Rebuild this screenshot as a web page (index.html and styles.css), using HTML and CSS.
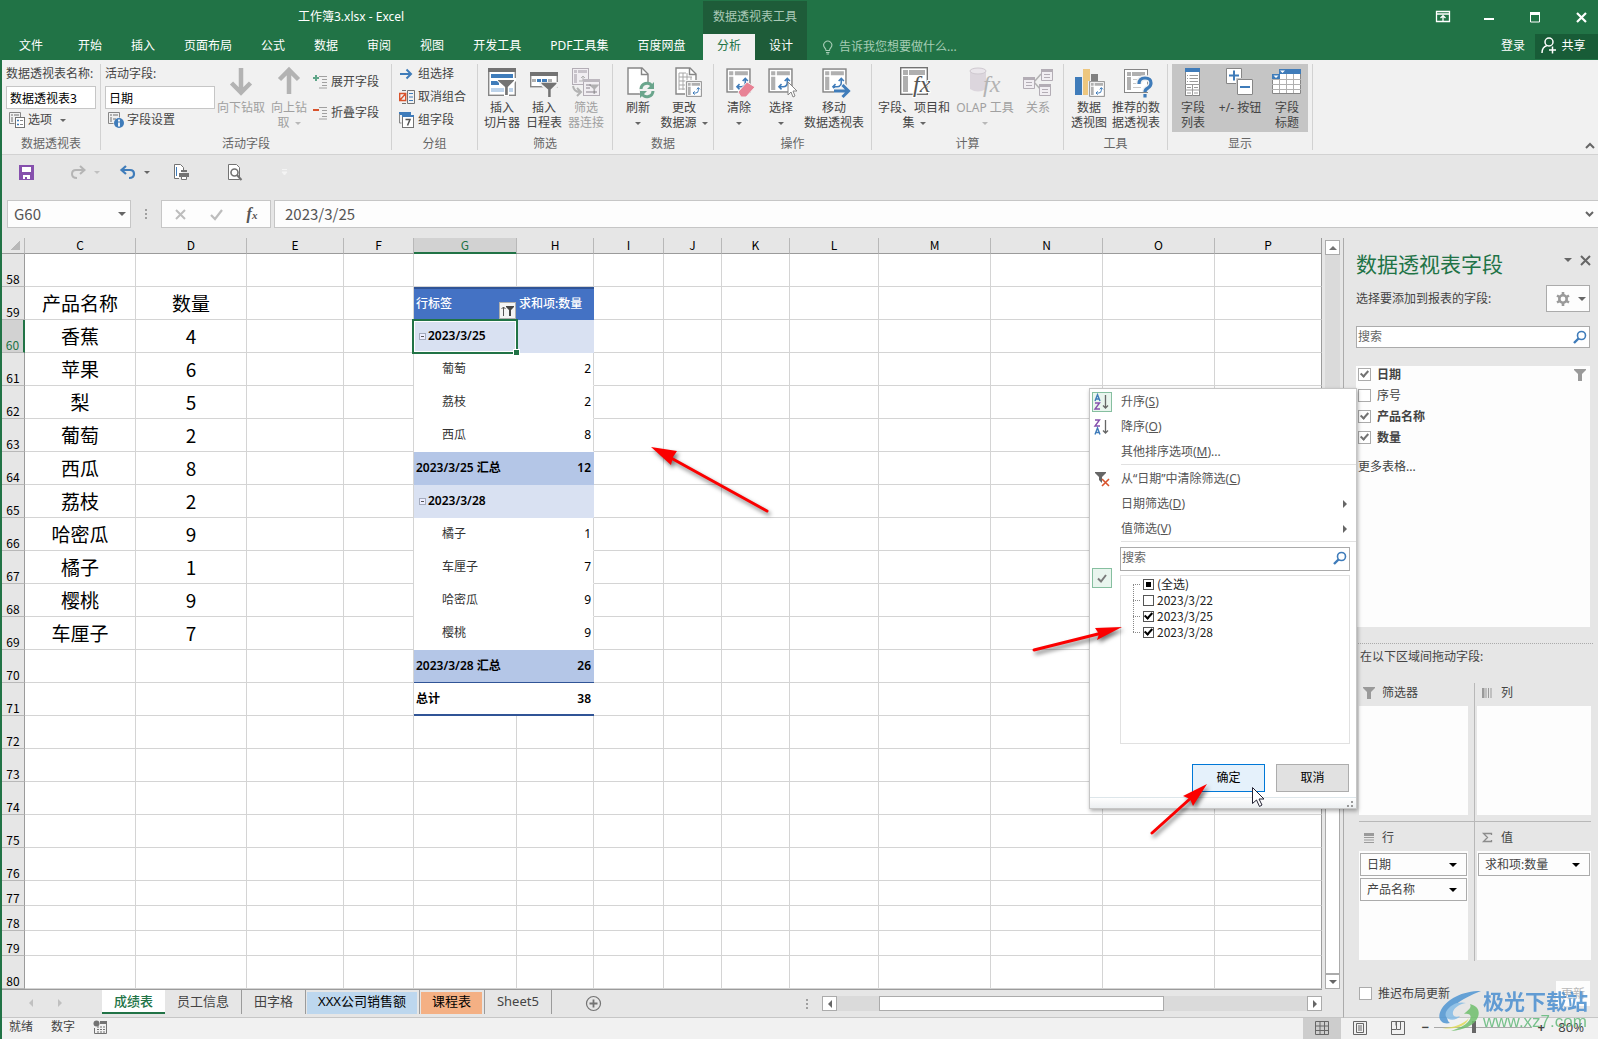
FILE: index.html
```html
<!DOCTYPE html>
<html lang="zh-CN">
<head>
<meta charset="utf-8">
<title>工作簿3.xlsx - Excel</title>
<link rel="stylesheet" href="styles.css">
</head>
<body>
<svg class="defs" aria-hidden="true">
  <symbol id="pivot" viewBox="0 0 24 24">
    <rect x="1" y="1" width="22" height="22" fill="#fff" stroke="#868686" stroke-width="1.4"/>
    <path d="M3 3h4v4H3zM8.500 3H21v4H8.500zM3 8.500h4V21H3z" fill="#b0b0b0"/>
    <path d="M11 18h3.500q4 0 4-4v-4M13 15.500 10.500 18l2.500 2.500M16 12.500 18.500 10l2.500 2.500" fill="none" stroke="#3f7cba" stroke-width="1.5"/>
  </symbol>
  <symbol id="funnel" viewBox="0 0 18 18"><path d="M0 1h18v1l-7 7v9H8V9L0 2z" fill="#737373"/></symbol>
  <symbol id="search" viewBox="0 0 14 14"><circle cx="8.500" cy="5.500" r="4" fill="none" stroke="#3f7cba" stroke-width="1.600"/><path d="M5.500 8.500 1 13" stroke="#3f7cba" stroke-width="2.400"/></symbol>
  <symbol id="page" viewBox="0 0 22 28"><path d="M1 1h14l6 6v20H1z" fill="#fff" stroke="#868686" stroke-width="1.400"/><path d="M14.500 1v6.500H21" fill="none" stroke="#868686" stroke-width="1.400"/></symbol>
</svg>
<div class="app">
  <header class="titlebar">
    <div class="title-left">
      <h1 class="doc-title">工作簿3.xlsx - Excel</h1>
      <nav class="tabs">
        <button class="tab file">文件</button><button class="tab">开始</button><button class="tab">插入</button><button class="tab">页面布局</button><button class="tab">公式</button><button class="tab">数据</button><button class="tab">审阅</button><button class="tab">视图</button><button class="tab">开发工具</button><button class="tab">PDF工具集</button><button class="tab">百度网盘</button>
      </nav>
    </div>
    <div class="context">
      <div class="context-title">数据透视表工具</div>
      <div class="context-tabs"><button class="tab active">分析</button><button class="tab">设计</button></div>
    </div>
    <div class="title-right">
      <div class="win">
        <button aria-label="功能区显示选项"><svg width="14" height="12"><path d="M.5.5h13v10H.500zM.5 3h13M7 10V5M4.500 7 7 4.700 9.500 7" fill="none" stroke="#fff" stroke-width="1.300"/></svg></button>
        <button aria-label="最小化"><svg width="10" height="12"><path d="M0 8h10" stroke="#fff" stroke-width="2"/></svg></button>
        <button aria-label="最大化"><svg width="10" height="11"><path d="M.5 1h9v9h-9z" fill="none" stroke="#fff"/><path d="M0 1.500h10" stroke="#fff" stroke-width="3"/></svg></button>
        <button aria-label="关闭"><svg width="11" height="11"><path d="m1 1 9 9m0-9-9 9" stroke="#fff" stroke-width="2.200"/></svg></button>
      </div>
      <div class="title-tools">
        <button class="tell"><svg width="12" height="15"><path d="M4 10.500q0-1.500-1.500-3A4 4 0 1 1 9 7.500q-1.500 1.500-1.500 3zM4 12.500h3.500M4.500 14h2.500" fill="none" stroke="#a6cdb5" stroke-width="1.100"/></svg>告诉我您想要做什么...</button>
        <button class="login">登录</button>
        <button class="share"><svg width="16" height="17"><circle cx="8" cy="5" r="4" fill="none" stroke="#fff" stroke-width="1.500"/><path d="M1 16q0-6 5-7.500M8 13h7M11.500 9.500v7" fill="none" stroke="#fff" stroke-width="1.500"/></svg>共享</button>
      </div>
    </div>
  </header>

  <section class="ribbon">
    <div class="group g-name">
      <div class="body col">
        <label for="pname">数据透视表名称:</label>
        <input id="pname" class="rin" value="数据透视表3">
        <button class="small"><svg width="17" height="16"><path d="M.5.5h11v5M.5.5v11h5" fill="none" stroke="#868686"/><path d="M2 2h2v2H2zM5 2h5v2H5zM2 5h2v5H2z" fill="#b0b0b0"/><rect x="6.500" y="5.500" width="9" height="10" fill="#fff" stroke="#737373"/><path d="M8 8.500h2M8 12.500h2" stroke="#3f7cba" stroke-width="1.500"/><path d="M11 8.500h3M11 12.500h3" stroke="#868686"/></svg>选项<i class="caret"></i></button>
      </div>
      <div class="glabel">数据透视表</div>
    </div>
    <div class="group g-active">
      <div class="body">
        <div class="col">
          <label for="pfield">活动字段:</label>
          <input id="pfield" class="rin" value="日期">
          <button class="small"><svg width="17" height="16"><path d="M.5.5h11v5M.5.5v11h5" fill="none" stroke="#868686"/><path d="M2 2h2v2H2zM5 2h5v2H5zM2 5h2v5H2zM5 6h3v2H5z" fill="#b0b0b0"/><circle cx="11" cy="11" r="5" fill="#3f7cba"/><path d="M11 7.500v2M11 10.500v4" stroke="#fff" stroke-width="1.800"/></svg>字段设置</button>
        </div>
        <button class="big off w48"><svg width="32" height="30"><path d="M16 1v25M6.500 16 16 25.500l9.500-9.500" fill="none" stroke="#b3b3b3" stroke-width="4.500"/></svg>向下钻取</button>
        <button class="big off w48"><svg width="32" height="30"><path d="M16 27V3M6.500 12.500 16 3l9.500 9.500" fill="none" stroke="#b3b3b3" stroke-width="4.500"/></svg>向上钻<br>取<i class="caret"></i></button>
        <div class="stack2">
          <button class="small"><svg width="16" height="14"><path d="M3 0v6M0 3h6" stroke="#5fa588" stroke-width="2"/><path d="M6 1.500h8M9 4.500h5M9 7.500h5M9 10.500h5M6 13h8" stroke="#a0a0a0"/></svg>展开字段</button>
          <button class="small"><svg width="16" height="14"><path d="M0 4h6" stroke="#d8532c" stroke-width="2"/><path d="M6 1.500h8M9 4.500h5M9 7.500h5M9 10.500h5M6 13h8" stroke="#a0a0a0"/></svg>折叠字段</button>
        </div>
      </div>
      <div class="glabel">活动字段</div>
    </div>
    <div class="group g-group">
      <div class="body col">
        <button class="small"><svg width="16" height="14"><path d="M1 7h11M7.500 2.500 12 7l-4.500 4.500" fill="none" stroke="#3f7cba" stroke-width="2"/></svg>组选择</button>
        <button class="small"><svg width="16" height="14"><path d="M.7 3.500h6v7h-6zM.7 10.500l6-7" fill="none" stroke="#d8532c" stroke-width="1.400"/><path d="M3 .5h4M3 13.500h4M8.500.5h7v13h-7z" fill="none" stroke="#737373"/><path d="M10 3.500h4M10 7h4M10 10.500h4" stroke="#3f7cba"/></svg>取消组合</button>
        <button class="small"><svg width="16" height="16"><path d="M0 1.500h12" stroke="#3f7cba" stroke-width="3"/><path d="M.5 2v9h2" fill="none" stroke="#868686"/><rect x="3.500" y="4.500" width="11" height="11" fill="#fff" stroke="#737373"/><path d="M3 4h12" stroke="#3f7cba" stroke-width="2"/><path d="M6.500 7.500h4.500L8.500 13.500" fill="none" stroke="#555" stroke-width="1.500"/></svg>组字段</button>
      </div>
      <div class="glabel">分组</div>
    </div>
    <div class="group g-filter">
      <div class="body">
        <button class="big w42"><svg width="32" height="30"><rect x="2.700" y="1.700" width="26.600" height="26.600" fill="#fff" stroke="#868686" stroke-width="1.400"/><path d="M2 1h28v4H2z" fill="#737373"/><path d="M5 7h22v4H5zM5 14h8v4H5z" fill="#3f7cba"/><path d="M5 21h22v4H5z" fill="#bdd3ea"/><path d="M10 11h20v3l-7 7v8h-5v-8l-8-8z" fill="#fff"/><use href="#funnel" x="11" y="12" width="18" height="16"/></svg>插入<br>切片器</button>
        <button class="big w42"><svg width="32" height="30"><rect x="2.700" y="5.700" width="26.600" height="14" fill="#fff" stroke="#868686" stroke-width="1.400"/><path d="M2 5h28v4H2z" fill="#737373"/><path d="M4 12h4v3H4zM20 12h4v3h-4z" fill="#b0b0b0"/><path d="M9 12h4v3H9zM14 12h5v3h-5z" fill="#3f7cba"/><path d="M11 15h20v4l-7 5v6h-5v-6l-8-7z" fill="#f1f1f1"/><use href="#funnel" x="12" y="15" width="18" height="15"/></svg>插入<br>日程表</button>
        <button class="big off w42"><svg width="32" height="30"><rect x="2.500" y="1.500" width="16" height="16" fill="#f1eef2" stroke="#b3adb5"/><path d="M4 3h3v3H4zM8 3h9v3H8zM4 7h3v9H4z" fill="#c8c3ca"/><path d="M9 14h4V9M11 11l2-2 2 2" fill="none" stroke="#b3b3b3"/><path d="M3 19q1 6 7 6M7 21l4 4-4 4" fill="none" stroke="#b3b3b3" stroke-width="2"/><rect x="13.500" y="12.500" width="16" height="16" fill="#f1eef2" stroke="#b3adb5"/><path d="M13 12h17v3H13z" fill="#bdb8bf"/><path d="M16 18h5M16 21h4M16 25h11" stroke="#bdb8bf" stroke-width="2"/><use href="#funnel" x="19" y="17" width="10" height="10" opacity=".5"/></svg>筛选<br>器连接</button>
      </div>
      <div class="glabel">筛选</div>
    </div>
    <div class="group g-data">
      <div class="body">
        <button class="big w40"><svg width="32" height="30"><use href="#page" x="5" y="0" width="22" height="28"/><circle cx="25" cy="23" r="8" fill="#f1f1f1"/><path d="M19 22a6 6 0 0 1 11-3M31 24a6 6 0 0 1-11 3" fill="none" stroke="#6aa58c" stroke-width="3"/><path d="M32 15v7h-7zM18 31v-7h7z" fill="#6aa58c"/></svg>刷新<br><i class="caret alone"></i></button>
        <button class="big w52"><svg width="32" height="30"><use href="#page" x="7" y="0" width="22" height="28"/><path d="M11 6h7M11 10h13M11 14h13M11 18h8M11 22h8M11 6v17M15 6v17M19 6v12M23 10v6" stroke="#a8a8a8" fill="none"/><path d="M17 13h15v17H17z" fill="#f1f1f1"/><use href="#pivot" x="18" y="14" width="16" height="16"/></svg>更改<br>数据源<i class="caret"></i></button>
      </div>
      <div class="glabel">数据</div>
    </div>
    <div class="group g-act">
      <div class="body">
        <button class="big w42"><svg width="32" height="30"><use href="#pivot" x="3" y="1" width="25" height="25"/><path d="m15 25 9-10 8 5-9 10h-5z" fill="#e88295" stroke="#f1f1f1"/></svg>清除<br><i class="caret alone"></i></button>
        <button class="big w42"><svg width="32" height="30"><use href="#pivot" x="3" y="1" width="25" height="25"/><path d="M23 15v13l3-3 2 5 2-1-2-5h4z" fill="#fff" stroke="#868686"/></svg>选择<br><i class="caret alone"></i></button>
        <button class="big w64"><svg width="32" height="30"><use href="#pivot" x="4" y="1" width="25" height="25"/><path d="M16 24h13M24 17.500l6.500 6.500-6.500 6.500" fill="none" stroke="#f1f1f1" stroke-width="6"/><path d="M16 24h14M24.500 18l6 6-6 6" fill="none" stroke="#3f7cba" stroke-width="3"/></svg>移动<br>数据透视表</button>
      </div>
      <div class="glabel">操作</div>
    </div>
    <div class="group g-calc">
      <div class="body">
        <button class="big w76"><svg width="32" height="30"><rect x="2.700" y=".7" width="26.600" height="26.600" fill="#fff" stroke="#737373" stroke-width="1.400"/><path d="M5 3h5v5H5zM11 3h16v5H11zM5 9h5v16H5z" fill="#b0b0b0"/><text x="15" y="25" class="fx halo">fx</text></svg>字段、项目和<br>集<i class="caret"></i></button>
        <button class="big off w66"><svg width="32" height="30"><path d="M1 4v18q8 5 16 0V4z" fill="#dcd6dd"/><ellipse cx="9" cy="4" rx="8" ry="3" fill="#eae6eb" stroke="#cfc9d0"/><text x="14" y="25" class="fx pale">fx</text></svg>OLAP 工具<br><i class="caret alone"></i></button>
        <button class="big off w40"><svg width="32" height="30"><path d="M12 15 19 7M12 15l7 8" stroke="#b3b3b3" stroke-width="1.500"/><g fill="#f1eef2" stroke="#b3adb5"><path d="M1.500 10.500h11v11h-11zM19.500 2.500h11v11h-11zM17.500 17.500h11v11h-11z"/><path d="M1 11.500h12M19 3.500h12M17 18.500h12" stroke-width="3"/><path d="M4 15.500h6M4 18.500h6M22 7.500h6M22 10.500h6M20 22.500h6M20 25.500h6"/></g></svg>关系</button>
      </div>
      <div class="glabel">计算</div>
    </div>
    <div class="group g-tools">
      <div class="body">
        <button class="big w40"><svg width="32" height="30"><path d="M2 10h7v18H2z" fill="#3f7cba"/><path d="M10 2h7v26h-7z" fill="#eec77f"/><path d="M18 7h7v21h-7z" fill="#808080"/><path d="M15 14h17v16H15z" fill="#f1f1f1"/><use href="#pivot" x="16" y="14" width="16" height="16"/></svg>数据<br>透视图</button>
        <button class="big w54"><svg width="32" height="30"><rect x="4.500" y="2.500" width="23" height="23" fill="#fff" stroke="#868686"/><path d="M7 5h4v4H7zM12 5h13v4H12zM7 10h4v13H7z" fill="#b0b0b0"/><path d="M13 12.500h11M13 16.500h8M13 20.500h8" stroke="#c8c8c8"/><path d="M19 17q0-6 6-6t6 5q0 3-3 5-3 1.500-3 4M25 27v3.500" fill="none" stroke="#f1f1f1" stroke-width="6"/><path d="M19 17q0-6 6-6t6 5q0 3-3 5-3 1.500-3 4M25 27v3.500" fill="none" stroke="#3f7cba" stroke-width="3.200"/></svg>推荐的数<br>据透视表</button>
      </div>
      <div class="glabel">工具</div>
    </div>
    <div class="group g-show">
      <div class="body on">
        <button class="big w42"><svg width="32" height="30"><rect x="8.500" y="1.500" width="14" height="27" fill="#fff" stroke="#868686"/><path d="M8 1h15v4H8z" fill="#3f7cba"/><path d="M10 8.500h1M12.500 8.500H21M10 11.500h1M12.500 11.500H21M10 14.500h1M12.500 14.500H21M8 17.500h15M8 23h15M15.500 17v12M10 20.500h4M17 20.500h4M10 26h4M17 26h4" stroke="#9a9a9a"/></svg>字段<br>列表</button>
        <button class="big w52"><svg width="32" height="30"><path d="M2.500 1.500h15v15h-15z" fill="#fff" stroke="#868686"/><path d="M12.500 11.500h17v17h-17z" fill="#fff" stroke="#c5c5c5"/><path d="M13.500 12.500h15v15h-15z" fill="#fff" stroke="#868686"/><path d="M5 8.500h10M10 3.500v10M16 20h10" stroke="#3f7cba" stroke-width="2"/></svg>+/- 按钮</button>
        <button class="big w42"><svg width="32" height="30"><path d="M1.500 7.500h7v-5h21v24h-28z" fill="#fff" stroke="#868686"/><path d="M1 12.500h29M1 17.500h29M1 22.500h29M8.500 7v19M15.500 7v19M22.500 7v19" stroke="#b0b0b0"/><path d="M8 2h22v5H8zM1 7h8v5H1z" fill="#3f7cba"/><path d="M9 3.500h5L11.500 6zM2.500 8.500h5L5 11z" fill="#fff"/></svg>字段<br>标题</button>
      </div>
      <div class="glabel">显示</div>
    </div>
    <button class="collapse" aria-label="折叠功能区"><svg width="10" height="7"><path d="m1 6 4-4 4 4" fill="none" stroke="#666" stroke-width="2"/></svg></button>
  </section>

  <div class="qat">
    <button class="q-save" aria-label="保存"><svg width="15" height="15"><path d="M0 0h15v15H0z" fill="#8650ad"/><path d="M3 2h9v5H3zM4 10h7v4H8v-2H6v2H4z" fill="#fff"/></svg></button>
    <button class="q-redo" aria-label="恢复"><svg width="16" height="14"><path d="M14 5H6q-4 0-4 4t5 4M10 1l4.500 4L10 9" fill="none" stroke="#b5b5b5" stroke-width="2"/></svg><i class="caret dim"></i></button>
    <button class="q-undo" aria-label="撤消"><svg width="16" height="14"><path d="M2 5h8q4 0 4 4t-5 4M6 1 1.500 5 6 9" fill="none" stroke="#3f7cba" stroke-width="2.200"/></svg><i class="caret"></i></button>
    <button class="q-print" aria-label="快速打印"><svg width="17" height="17"><path d="M6 14.500H1.500V.500h6l3 3v3" fill="#fff" stroke="#737373"/><path d="M3.500 3v9" stroke="#3f7cba"/><path d="M6 9h10v4H6zM8 6h6v2H8z" fill="#737373"/><path d="M8.500 12.500h5v3h-5z" fill="#fff" stroke="#737373"/></svg></button>
    <button class="q-view" aria-label="打印预览"><svg width="16" height="17"><path d="M1.500.5h8l3 3v12h-11z" fill="#fff" stroke="#737373"/><circle cx="7.500" cy="8.500" r="3.500" fill="#fff" stroke="#737373" stroke-width="1.600"/><path d="m10 11 4.500 5" stroke="#737373" stroke-width="2"/></svg></button>
    <button class="q-more" aria-label="自定义"><svg width="7" height="7"><path d="M1 .5h5M1 3h5L3.500 6z" fill="#f4f4f4" stroke="#f4f4f4"/></svg></button>
  </div>

  <div class="fbar">
    <div class="namebox"><input aria-label="名称框" value="G60"><i class="tri down"></i></div>
    <div class="dots"><i></i><i></i><i></i></div>
    <div class="fbtns">
      <button aria-label="取消"><svg width="11" height="11"><path d="m1 1 9 9m0-9-9 9" stroke="#bdbdbd" stroke-width="2"/></svg></button>
      <button aria-label="输入"><svg width="13" height="11"><path d="m1 6 4 4 7-9" fill="none" stroke="#bdbdbd" stroke-width="2.200"/></svg></button>
      <button aria-label="插入函数" class="fxb">f<small>x</small></button>
    </div>
    <div class="finput"><input aria-label="编辑栏" value="2023/3/25"><svg width="9" height="7"><path d="m1 1 3.500 3.500L8 1" fill="none" stroke="#666" stroke-width="2"/></svg></div>
  </div>

  <main class="work">
    <section class="sheet">
      <div class="gridrow">
        <table class="grid">
          <colgroup><col class="c-h"><col class="c-111"><col class="c-111"><col class="c-e"><col class="c-70"><col class="c-g"><col class="c-hh"><col class="c-70"><col class="c-j"><col class="c-k"><col class="c-l"><col class="c-112"><col class="c-112"><col class="c-112"><col></colgroup>
          <thead><tr><th class="corner"></th><th>C</th><th>D</th><th>E</th><th>F</th><th class="sel">G</th><th>H</th><th>I</th><th>J</th><th>K</th><th>L</th><th>M</th><th>N</th><th>O</th><th>P</th></tr></thead>
          <tbody>
          <tr><th>58</th><td></td><td></td><td></td><td></td><td></td><td></td><td></td><td></td><td></td><td></td><td></td><td></td><td></td><td></td></tr>
          <tr><th>59</th><td>产品名称</td><td>数量</td><td></td><td></td><td class="pv head">行标签<button class="fbtn" aria-label="筛选"><svg width="13" height="13"><path d="M2.500 12V3M.5 5l2-2 2 2" fill="none" stroke="#555"/><path d="M5 2h8v1L10 6v6H8V6L5 3z" fill="#444"/></svg></button></td><td class="pv head">求和项:数量</td><td></td><td></td><td></td><td></td><td></td><td></td><td></td><td></td></tr>
          <tr><th class="sel">60</th><td>香蕉</td><td>4</td><td></td><td></td><td class="pv light cur"><i class="minus"></i>2023/3/25<span class="cursor-box"></span></td><td class="pv light"></td><td></td><td></td><td></td><td></td><td></td><td></td><td></td><td></td></tr>
          <tr><th>61</th><td>苹果</td><td>6</td><td></td><td></td><td class="pv item">葡萄</td><td class="pv num">2</td><td></td><td></td><td></td><td></td><td></td><td></td><td></td><td></td></tr>
          <tr><th>62</th><td>梨</td><td>5</td><td></td><td></td><td class="pv item">荔枝</td><td class="pv num">2</td><td></td><td></td><td></td><td></td><td></td><td></td><td></td><td></td></tr>
          <tr><th>63</th><td>葡萄</td><td>2</td><td></td><td></td><td class="pv item">西瓜</td><td class="pv num">8</td><td></td><td></td><td></td><td></td><td></td><td></td><td></td><td></td></tr>
          <tr><th>64</th><td>西瓜</td><td>8</td><td></td><td></td><td class="pv sub">2023/3/25 汇总</td><td class="pv sub num">12</td><td></td><td></td><td></td><td></td><td></td><td></td><td></td><td></td></tr>
          <tr><th>65</th><td>荔枝</td><td>2</td><td></td><td></td><td class="pv light"><i class="minus"></i>2023/3/28</td><td class="pv light"></td><td></td><td></td><td></td><td></td><td></td><td></td><td></td><td></td></tr>
          <tr><th>66</th><td>哈密瓜</td><td>9</td><td></td><td></td><td class="pv item">橘子</td><td class="pv num">1</td><td></td><td></td><td></td><td></td><td></td><td></td><td></td><td></td></tr>
          <tr><th>67</th><td>橘子</td><td>1</td><td></td><td></td><td class="pv item">车厘子</td><td class="pv num">7</td><td></td><td></td><td></td><td></td><td></td><td></td><td></td><td></td></tr>
          <tr><th>68</th><td>樱桃</td><td>9</td><td></td><td></td><td class="pv item">哈密瓜</td><td class="pv num">9</td><td></td><td></td><td></td><td></td><td></td><td></td><td></td><td></td></tr>
          <tr><th>69</th><td>车厘子</td><td>7</td><td></td><td></td><td class="pv item">樱桃</td><td class="pv num">9</td><td></td><td></td><td></td><td></td><td></td><td></td><td></td><td></td></tr>
          <tr><th>70</th><td></td><td></td><td></td><td></td><td class="pv sub last">2023/3/28 汇总</td><td class="pv sub last num">26</td><td></td><td></td><td></td><td></td><td></td><td></td><td></td><td></td></tr>
          <tr><th>71</th><td></td><td></td><td></td><td></td><td class="pv total">总计</td><td class="pv total num">38</td><td></td><td></td><td></td><td></td><td></td><td></td><td></td><td></td></tr>
          <tr><th>72</th><td></td><td></td><td></td><td></td><td></td><td></td><td></td><td></td><td></td><td></td><td></td><td></td><td></td><td></td></tr>
          <tr><th>73</th><td></td><td></td><td></td><td></td><td></td><td></td><td></td><td></td><td></td><td></td><td></td><td></td><td></td><td></td></tr>
          <tr><th>74</th><td></td><td></td><td></td><td></td><td></td><td></td><td></td><td></td><td></td><td></td><td></td><td></td><td></td><td></td></tr>
          <tr><th>75</th><td></td><td></td><td></td><td></td><td></td><td></td><td></td><td></td><td></td><td></td><td></td><td></td><td></td><td></td></tr>
          <tr><th>76</th><td></td><td></td><td></td><td></td><td></td><td></td><td></td><td></td><td></td><td></td><td></td><td></td><td></td><td></td></tr>
          <tr class="short"><th>77</th><td></td><td></td><td></td><td></td><td></td><td></td><td></td><td></td><td></td><td></td><td></td><td></td><td></td><td></td></tr>
          <tr class="short"><th>78</th><td></td><td></td><td></td><td></td><td></td><td></td><td></td><td></td><td></td><td></td><td></td><td></td><td></td><td></td></tr>
          <tr class="short"><th>79</th><td></td><td></td><td></td><td></td><td></td><td></td><td></td><td></td><td></td><td></td><td></td><td></td><td></td><td></td></tr>
          <tr><th>80</th><td></td><td></td><td></td><td></td><td></td><td></td><td></td><td></td><td></td><td></td><td></td><td></td><td></td><td></td></tr>
          </tbody>
        </table>
        <div class="vscroll">
          <button aria-label="向上滚动"><i class="tri up"></i></button>
          <div class="vtrack"><div class="vthumb"></div></div>
          <button aria-label="向下滚动"><i class="tri down"></i></button>
        </div>
      </div>
      <div class="sheetbar">
        <div class="navs"><i class="tri left dim"></i><i class="tri right dim"></i></div>
        <button class="stab cur">成绩表</button><button class="stab">员工信息</button><button class="stab">田字格</button><button class="stab blue"><span>XXX公司销售额</span></button><button class="stab orange"><span>课程表</span></button><button class="stab">Sheet5</button>
        <button class="addsheet" aria-label="新工作表"><svg width="17" height="17"><circle cx="8.500" cy="8.500" r="7" fill="none" stroke="#737373" stroke-width="1.200"/><path d="M8.500 4.500v8M4.500 8.500h8" stroke="#737373" stroke-width="1.800"/></svg></button>
        <div class="dots"><i></i><i></i><i></i></div>
        <div class="hscroll">
          <button aria-label="向左滚动"><i class="tri left"></i></button>
          <div class="htrack"><div class="hthumb"></div></div>
          <button aria-label="向右滚动"><i class="tri right"></i></button>
        </div>
      </div>
    </section>

    <aside class="pane">
      <div class="phead"><h2>数据透视表字段</h2><button aria-label="任务窗格选项"><i class="tri down"></i></button><button aria-label="关闭"><svg width="11" height="11"><path d="m1 1 9 9m0-9-9 9" stroke="#666" stroke-width="2"/></svg></button></div>
      <div class="psub"><span>选择要添加到报表的字段:</span><button class="gear" aria-label="工具"><svg width="14" height="14"><circle cx="7" cy="7" r="3.700" fill="none" stroke="#9a9a9a" stroke-width="2.600"/><path d="M7 0v3M7 11v3M1 3.500l2.500 1.500M10.500 9l2.500 1.500M1 10.500 3.500 9M10.500 5 13 3.500" stroke="#9a9a9a" stroke-width="2.600"/></svg><i class="tri down"></i></button></div>
      <div class="psearch"><input aria-label="搜索字段" placeholder="搜索"><svg width="14" height="14"><use href="#search"/></svg></div>
      <div class="plist">
        <label class="b"><input type="checkbox" checked>日期<svg width="12" height="12"><path d="M0 0h12v1L8 5v7H4V5L0 1z" fill="#9a9a9a"/></svg></label>
        <label><input type="checkbox">序号</label>
        <label class="b"><input type="checkbox" checked>产品名称</label>
        <label class="b"><input type="checkbox" checked>数量</label>
        <a href="#more">更多表格...</a>
      </div>
      <div class="pdrag">在以下区域间拖动字段:</div>
      <div class="areas">
        <div class="area a1"><h3><svg width="13" height="12"><path d="M0 0h12v1L8 5v7H4V5L0 1z" fill="#9a9a9a"/></svg>筛选器</h3><div class="drop"></div></div>
        <div class="area a2"><h3><svg width="13" height="12"><path d="M0 1h2.500v10H0z" fill="#9a9a9a"/><path d="M4 1v10M6.500 1v10M9 1v10" stroke="#9a9a9a"/></svg>列</h3><div class="drop"></div></div>
        <div class="area a3"><h3><svg width="13" height="12"><path d="M1 1h10v3H1z" fill="#9a9a9a"/><path d="M1 5.500h10M1 8h10M1 10.500h10" stroke="#9a9a9a"/></svg>行</h3><div class="drop"><button>日期<i class="tri down blk"></i></button><button>产品名称<i class="tri down blk"></i></button></div></div>
        <div class="area a4"><h3><svg width="13" height="12"><path d="M9.500 3V1.500H1.500l4 4-4 4h8V8" fill="none" stroke="#8c8c8c" stroke-width="1.300"/></svg>值</h3><div class="drop"><button>求和项:数量<i class="tri down blk"></i></button></div></div>
      </div>
      <div class="pfoot"><label><input type="checkbox">推迟布局更新</label><button disabled>更新</button></div>
    </aside>

    <div class="menu">
      <button class="mi"><span class="mic on"><svg width="16" height="16"><path d="M1 7 3.500.700 6 7M2 5h3" fill="none" stroke="#3f7cba" stroke-width="1.400"/><path d="M1 9h4.500L1 15h5" fill="none" stroke="#8650ad" stroke-width="1.400"/><path d="M11.500 1v13M9 11.500l2.500 2.500 2.500-2.500" fill="none" stroke="#666" stroke-width="1.300"/></svg></span>升序(<u>S</u>)</button>
      <button class="mi"><span class="mic"><svg width="16" height="16"><path d="M1 1h4.500L1 7h5" fill="none" stroke="#8650ad" stroke-width="1.400"/><path d="M1 15.500 3.500 9 6 15.500M2 13.500h3" fill="none" stroke="#3f7cba" stroke-width="1.400"/><path d="M11.500 1v13M9 11.500l2.500 2.500 2.500-2.500" fill="none" stroke="#666" stroke-width="1.300"/></svg></span>降序(<u>O</u>)</button>
      <button class="mi"><span class="mic"></span>其他排序选项(<u>M</u>)...</button>
      <hr>
      <button class="mi"><span class="mic"><svg width="16" height="16"><path d="M1 1h11v1L8 6v6L5 9V6L1 2z" fill="#666"/><path d="m8 8 7 7m0-7-7 7" stroke="#d8532c" stroke-width="1.600"/></svg></span>从“日期”中清除筛选(<u>C</u>)</button>
      <button class="mi"><span class="mic"></span>日期筛选(<u>D</u>)<i class="tri right"></i></button>
      <button class="mi"><span class="mic"></span>值筛选(<u>V</u>)<i class="tri right"></i></button>
      <hr>
      <div class="mbody">
        <span class="mic on tick"><svg width="10" height="9"><path d="m1 4.500 3 3 5-6.500" fill="none" stroke="#7a7a7a" stroke-width="2"/></svg></span>
        <div class="mcol">
          <div class="psearch"><input aria-label="搜索项目" placeholder="搜索"><svg width="14" height="14"><use href="#search"/></svg></div>
          <div class="tree">
            <label><input type="checkbox" class="mixed">(全选)</label>
            <label><input type="checkbox">2023/3/22</label>
            <label><input type="checkbox" checked>2023/3/25</label>
            <label><input type="checkbox" checked>2023/3/28</label>
          </div>
          <div class="mbtns"><button class="ok">确定</button><button>取消</button></div>
        </div>
      </div>
      <div class="grip"><svg width="8" height="8"><path d="M5 0h2v2H5zM5 4h2v2H5zM1 4h2v2H1z" fill="#9a9a9a"/></svg></div>
    </div>

    <svg class="notes" width="640" height="420" viewBox="640 430 640 420" aria-hidden="true">
      <g class="arrows">
        <path d="m767 511-96-53" stroke="#fb0000" stroke-width="3" stroke-linecap="round"/><path d="m651 447 26 4-4 6-2 8z" fill="#fb0000"/>
        <path d="m1034 650 68-17" stroke="#fb0000" stroke-width="3" stroke-linecap="round"/><path d="m1122 627-27 1 4 6-2 6z" fill="#fb0000"/>
        <path d="m1152 833 40-36" stroke="#fb0000" stroke-width="3" stroke-linecap="round"/><path d="m1207 784-24 12 7 3 3 7z" fill="#fb0000"/>
      </g>
      <path d="M1252.500 787.500v16l4-3.500 3 6.500 2.500-1.500-3-6h5z" fill="#fff" stroke="#223"/>
    </svg>
  </main>

  <footer class="status">
    <span>就绪</span><span>数字</span>
    <svg width="14" height="14"><circle cx="3.500" cy="3.500" r="3" fill="#737373"/><path d="M7 2.500h6.500v11H1.500V8" fill="none" stroke="#737373"/><path d="M7 1h7v3H7z" fill="#737373"/><path d="M4 7h2M7 7h2M10 7h2M4 9.500h2M7 9.500h2M10 9.500h2M4 12h2M7 12h2M10 12h2" stroke="#737373"/></svg>
    <div class="views">
      <button class="cur" aria-label="普通"><svg width="14" height="14"><path d="M.5.5h13v13H.500zM5 0v14M9.500 0v14M0 5h14M0 9.500h14" fill="none" stroke="#666"/></svg></button>
      <button aria-label="页面布局"><svg width="14" height="14"><path d="M.5.5h13v13H.500zM3.500 2.500h7v9h-7zM5 5h4M5 7h4M5 9h4" fill="none" stroke="#666"/></svg></button>
      <button aria-label="分页预览"><svg width="14" height="14"><path d="M.5.5h13v13H.500zM5 .5v4M5.500.5v8h4v-8M0 8.500h5" fill="none" stroke="#666"/></svg></button>
    </div>
    <div class="zoom"><button aria-label="缩小">−</button><input type="range" aria-label="缩放" min="0" max="100" value="40"><button aria-label="放大">+</button><span>80%</span></div>
  </footer>

  <div class="mark">
    <svg width="44" height="42" viewBox="0 0 44 42"><path d="M43 1C24 1 9 9 3 20c-5 10 2 15 9 13-5-4-3-11 4-17C24 9 33 5 43 1z" fill="#4f96d3"/><path d="M8 22c4-8 13-11 20-9-7 1-12 5-13 9s3 6 7 4c-4 6-17 5-14-4z" fill="#85bce6"/><path d="M32 14c8 2 10 7 8 13-3 8-14 13-27 14 9-3 17-7 19-12 2-4-1-6-6-5 4-4 8-6 6-10z" fill="#6fbf6d"/><path d="M4 38c11 0 22-4 27-10-3 8-13 12-27 10z" fill="#e0dc5a"/></svg>
    <div><b>极光下载站</b><em>www.xz7.com</em></div>
  </div>
</div>
</body>
</html>
```
FILE: styles.css
```css
* { box-sizing: border-box; }
body { margin: 0; font: 12px/16px "Noto Sans", "Noto Sans CJK SC", sans-serif; color: #444; background: #e6e6e6; }
button, input { font: inherit; color: inherit; }
button { border: 0; padding: 0; background: none; white-space: nowrap; }
input { border: 0; padding: 0; outline: 0; background: none; min-width: 0; }
h1, h2, h3 { margin: 0; font-weight: 400; }
i { font-style: normal; }
svg { flex: none; overflow: visible; }
.defs { position: absolute; width: 0; height: 0; }
.app { display: flex; flex-direction: column; min-height: 100vh; border-left: 2px solid #217346; position: relative; }

.caret { display: inline-block; border: 3px solid transparent; border-top: 3px solid #666; border-bottom: 0; vertical-align: 2px; margin-left: 6px; }
.caret.dim { border-top-color: #c0c0c0; }
.tri { display: block; width: 0; height: 0; border: 4px solid transparent; }
.tri.up { border-bottom-color: #737373; border-top: 0; }
.tri.down { border-top-color: #666; border-bottom: 0; }
.tri.left { border-right-color: #666; border-left: 0; }
.tri.right { border-left-color: #666; border-right: 0; }
.tri.blk { border-top-color: #000; }
.tri.left.dim { border-right-color: #c0c0c0; }
.tri.right.dim { border-left-color: #c0c0c0; }

.titlebar { display: flex; background: #217346; color: #fff; height: 60px; }
.title-left { width: 701px; }
.doc-title { font-size: 12px; line-height: 34px; height: 34px; padding-left: 296px; }
.tabs { display: flex; }
.tab { height: 26px; padding: 0 15px 2px 14px; }
.tab.file { padding: 0 21px 2px 17px; }
.context { background: #1e5c39; width: 104px; margin-top: 1px; }
.context-title { height: 33px; line-height: 32px; text-align: center; color: #a9c9b6; }
.context-tabs { display: flex; }
.context-tabs .tab { flex: 1; padding: 0 0 2px; }
.tab.active { background: #f1f1f1; color: #217346; }
.title-right { flex: 1; display: flex; flex-direction: column; }
.win { height: 34px; display: flex; justify-content: flex-end; align-items: center; }
.win button { width: 46px; height: 32px; display: flex; align-items: center; justify-content: center; }
.win button:last-child { margin-right: -6px; }
.title-tools { height: 26px; display: flex; }
.tell { display: flex; gap: 5px; align-items: center; padding: 0 0 0 15px; color: #a6cdb5; }
.login { margin-left: auto; padding: 0 10px 2px; }
.share { background: #185c37; width: 63px; height: 25px; display: flex; align-items: center; justify-content: center; gap: 4px; padding: 0 6px 2px 0; }

.ribbon { display: flex; background: #f1f1f1; border-bottom: 1px solid #d2d2d2; height: 95px; padding: 4px 0; }
.group { border-right: 1px solid #d2d2d2; display: flex; flex-direction: column; flex: none; height: 86px; }
.body { display: flex; height: 68px; flex: none; }
.col { display: flex; flex-direction: column; align-items: flex-start; }
.glabel { text-align: center; color: #666; line-height: 16px; padding-top: 4px; }
.rin { background: #fff; border: 1px solid #c6c6c6; height: 23px; padding: 0 3px; color: #000; margin: 3px 0; }
.col label { line-height: 19px; white-space: nowrap; }
.small { display: flex; align-items: center; gap: 2px; height: 16px; }
.col .small svg { margin-left: 3px; }
.g-name { width: 99px; } .g-name .body { padding: 0 4px; } .g-name .rin { width: 90px; }
.g-active { width: 291px; } .g-active .body { padding-left: 4px; }
.g-active .col { width: 112px; } .g-active .rin { width: 110px; }
.stack2 { display: flex; flex-direction: column; padding-top: 10px; gap: 15px; }
.g-group { width: 86px; } .g-group .col { padding: 2px 0 0 4px; gap: 7px; } .g-group .small { gap: 3px; }
.g-filter { width: 135px; } .g-filter .body { padding-left: 3px; }
.g-data { width: 101px; } .g-data .body { padding-left: 5px; }
.g-act { width: 158px; } .g-act .body { padding-left: 4px; }
.g-calc { width: 192px; } .g-calc .body { padding-left: 4px; }
.g-tools { width: 104px; } .g-tools .body { padding-left: 5px; }
.g-show { width: 145px; }
.on.body { background: #c5c5c5; margin: 0 4px; }
.big { text-align: center; line-height: 15px; padding-top: 3px; align-self: flex-start; }
.big svg { display: block; margin: 0 auto 3px; }
.big .caret { margin-left: 5px; }
.big .caret.alone { margin-left: 0; }
.off { color: #a0a0a0; }
.off .caret { border-top-color: #b8b8b8; }
.w40 { width: 40px; } .w42 { width: 42px; } .w48 { width: 48px; } .w52 { width: 52px; }
.w54 { width: 54px; } .w64 { width: 64px; } .w66 { width: 66px; } .w76 { width: 76px; }
.fx { font: italic 24px "Liberation Serif", serif; fill: #555; }
.fx.halo { paint-order: stroke; stroke: #fff; stroke-width: 2px; }
.fx.pale { fill: #b3b3b3; }
.collapse { margin: auto 3px 0 auto; height: 10px; }
.collapse svg { display: block; }

.qat { height: 45px; padding: 0 0 11px 17px; display: flex; align-items: center; }
.qat button { display: flex; align-items: center; }
.q-save { width: 51px; } .q-redo { width: 50px; } .q-undo { width: 53px; } .q-print { width: 54px; } .q-view { width: 54px; }
.qat .caret { margin-left: 8px; }

.fbar { display: flex; height: 38px; padding: 0 0 10px 5px; font: 15px/26px "Noto Sans CJK SC", sans-serif; color: #555; }
.namebox, .fbtns, .finput { background: #fdfdfd; border: 1px solid #c6c6c6; display: flex; align-items: center; }
.namebox { width: 124px; padding: 0 4px 0 6px; } .namebox input { flex: 1; }
.dots { width: 30px; display: flex; flex-direction: column; gap: 2px; align-items: center; justify-content: center; }
.dots i { width: 2px; height: 2px; background: #a0a0a0; }
.fbtns { width: 110px; justify-content: space-around; margin-right: 3px; }
.fbtns button { width: 36px; display: flex; align-items: center; justify-content: center; }
.fbtns .fxb { font: italic bold 16px "Liberation Serif", serif; display: block; }
.fxb small { font-size: 11px; }
.finput { flex: 1; border-right: 0; padding: 0 4px 0 10px; } .finput input { flex: 1; }

.work { display: grid; grid-template-columns: 1fr 255px; position: relative; flex: 1; }
.sheet { display: flex; flex-direction: column; min-width: 0; }
.gridrow { display: flex; flex: 1; }
.grid { border-spacing: 0; table-layout: fixed; flex: 1; width: 0; color: #000; font-family: "Noto Sans CJK SC", sans-serif; align-self: flex-start; }
.grid th, .grid td { padding: 0; font-weight: 400; overflow: hidden; white-space: nowrap; border-right: 1px solid #d4d4d4; border-bottom: 1px solid #d4d4d4; }
.grid td { background: #fff; text-align: center; font-size: 19px; line-height: 24px; }
.grid tbody tr { height: 33px; }
.grid tbody tr.short { height: 25px; }
.grid thead tr { height: 16px; }
.grid thead th { line-height: 13px; padding-bottom: 2px; font-size: 12px; border-right-color: #b8b8b8; border-bottom-color: #9b9b9b; }
.grid tbody th { vertical-align: bottom; font-size: 12px; line-height: 13px; padding-bottom: 1px; border-right-color: #9b9b9b; border-bottom-color: #b8b8b8; }
.grid .corner { background: linear-gradient(135deg, transparent 50%, #b8b8b8 50%) right 4px bottom 3px / 9px 9px no-repeat; }
.grid thead th.sel { background: #d2d2d2; color: #217346; box-shadow: inset 0 -1px #217346; border-bottom-color: #217346; }
.grid tbody th.sel { background: #d2d2d2; color: #217346; border-right: 2px solid #217346; }
.grid tr > :last-child { border-right-color: #9b9b9b; }
.c-h { width: 23px; } .c-111 { width: 111px; } .c-e { width: 97px; } .c-70 { width: 70px; } .c-g { width: 103px; } .c-hh { width: 77px; }
.c-j { width: 58px; } .c-k { width: 68px; } .c-l { width: 89px; } .c-112 { width: 112px; }
.grid td.pv { font: 12px/16px "Noto Sans", "Noto Sans CJK SC", sans-serif; text-align: left; padding: 0 2px; border-color: #fff; border-right-width: 0; }
.grid td.head { background: #4472c4; color: #fff; border-color: #4472c4; border-top: 2px solid #305496; font-weight: 500; position: relative; }
.grid td.light { background: #d9e1f2; border-color: #d9e1f2; font-weight: 600; padding-left: 5px; }
.grid td.sub { background: #b4c6e7; border-color: #b4c6e7; font-weight: 600; }
.grid td.item { padding-left: 28px; color: #333; }
.grid td.num { text-align: right; border-right: 1px solid #d4d4d4; }
.grid td.sub.num { border-right-width: 0; padding-right: 3px; }
.grid td.total { font-weight: 600; border-bottom: 2px solid #305496; }
.grid td.total.num { border-right-width: 0; padding-right: 3px; }
.grid td.last { border-bottom-color: #305496; }
.grid td.cur { position: relative; overflow: visible; }
.cursor-box { position: absolute; inset: -1px -1px -2px -2px; border: 2px solid #217346; box-shadow: inset 0 0 0 1px #fff; }
.cursor-box::after { content: ""; position: absolute; right: -3px; bottom: -3px; width: 5px; height: 5px; background: #217346; box-shadow: 0 0 0 1px #fff; }
.minus { display: inline-block; width: 7px; height: 7px; border: 1px solid #a4abbd; background: linear-gradient(#555, #555) center / 3px 1px no-repeat #eef; margin-right: 2px; }
.fbtn { position: absolute; right: 1px; bottom: 0; width: 17px; height: 17px; background: #f4f4f4; border: 1px solid #b0b0b0; padding: 1px; }
.fbtn svg { display: block; }
.vscroll { width: 21px; padding: 2px 3px 0; display: flex; flex-direction: column; }
.vscroll button, .hscroll button { width: 15px; height: 15px; flex: none; background: #fff; border: 1px solid #ababab; display: flex; align-items: center; justify-content: center; }
.vtrack { flex: 1; background: #dadada; padding-top: 200px; display: flex; }
.vthumb { flex: 1; background: #fff; border: 1px solid #ababab; }

.sheetbar { height: 29px; display: flex; font-size: 13px; align-items: flex-start; background: linear-gradient(#9b9b9b, #9b9b9b) 0 0 / calc(100% - 21px) 1px no-repeat; border-bottom: 1px solid #c6c6c6; padding: 1px 21px 0 0; }
.navs { width: 100px; height: 26px; display: flex; align-items: center; padding-left: 27px; gap: 25px; }
.stab { height: 24px; padding: 0 12px 3px; border-right: 1px solid #9b9b9b; }
.stab.cur { background: #fff; color: #217346; border-bottom: 2px solid #217346; border-right: 0; padding-bottom: 1px; font-weight: 500; }
.stab.blue, .stab.orange { padding: 2px 2px 0 1px; color: #000; }
.stab span { display: block; line-height: 18px; padding: 0 11px 4px; }
.blue span { background: #bdd7ee; }
.orange span { background: #f4b084; }
.addsheet { margin: 5px auto 0 33px; height: 17px; }
.sheetbar .dots { height: 27px; }
.hscroll { width: 500px; display: flex; padding-top: 6px; }
.htrack { flex: 1; background: #dadada; padding: 0 143px 0 42px; display: flex; height: 15px; }
.hthumb { flex: 1; background: #fff; border: 1px solid #ababab; }

.pane { border-left: 1px solid #ababab; border-bottom: 1px solid #c6c6c6; padding: 11px 8px 0 12px; }
.phead { display: flex; align-items: center; height: 30px; color: #217346; margin-bottom: 6px; gap: 8px; }
.phead h2 { font-size: 21px; line-height: 30px; flex: 1; }
.phead button { margin-top: -8px; height: 12px; display: flex; align-items: center; }
.phead button:last-child { margin-right: -1px; }
.psub { display: flex; justify-content: space-between; align-items: center; height: 27px; }
.gear { width: 44px; height: 27px; background: #fdfdfd; border: 1px solid #ababab; display: flex; align-items: center; padding-left: 9px; gap: 8px; }
.psearch { background: #fff; border: 1px solid #ababab; display: flex; align-items: center; height: 22px; padding: 0 2px 0 1px; margin: 14px 0 18px; }
.psearch input { flex: 1; }
.psearch input::placeholder { color: #666; opacity: 1; }
.plist { background: #fdfdfd; height: 261px; padding: 0 2px; }
.plist label { display: flex; align-items: center; height: 21px; padding-bottom: 4px; gap: 6px; }
.plist .b { font-weight: 600; }
.plist label svg { margin: 0 2px 0 auto; }
.plist a { color: #444; text-decoration: none; display: block; margin-top: 9px; }
input[type=checkbox] { appearance: none; width: 13px; height: 13px; border: 1px solid #ababab; background: #fff; margin: 0; flex: none; position: relative; }
input[type=checkbox]:checked::after { content: ""; position: absolute; left: 3px; top: 0; width: 3px; height: 6px; border: solid #737373; border-width: 0 2px 2px 0; transform: rotate(42deg); }
.pdrag { border-top: 1px dotted #ababab; margin: 16px -3px 0 2px; padding: 5px 0 18px 2px; }
.areas { display: grid; grid-template-columns: 116px 1fr; margin: 0 -1px 0 3px; }
.area { height: 139px; }
.a1 { border-right: 1px solid #b8b8b8; border-bottom: 1px solid #b8b8b8; padding-right: 6px; }
.a2 { border-bottom: 1px solid #b8b8b8; padding-left: 2px; }
.a3 { border-right: 1px solid #b8b8b8; padding: 6px 6px 0 0; }
.a4 { padding: 6px 0 0 2px; }
.area h3 { font-size: 12px; line-height: 18px; height: 23px; display: flex; align-items: center; gap: 6px; padding: 0 0 4px 4px; }
.a2 h3, .a4 h3 { padding-left: 5px; }
.drop { background: #fdfdfd; height: 109px; padding: 2px 1px; display: flex; flex-direction: column; gap: 2px; }
.drop button { height: 23px; border: 1px solid #ababab; display: flex; align-items: center; justify-content: space-between; padding: 0 9px 0 6px; }
.pfoot { display: flex; justify-content: space-between; align-items: center; padding-left: 3px; margin-top: 20px; }
.pfoot label { display: flex; align-items: center; gap: 6px; }
.pfoot button { background: #fdfdfd; color: #b8b8b8; width: 34px; height: 25px; }

.menu { position: absolute; right: 241px; top: 150px; width: 268px; height: 421px; background: #fff; border: 1px solid #c6c6c6; box-shadow: 1px 2px 4px #0005; display: flex; flex-direction: column; color: #555; }
.mi { display: flex; align-items: center; height: 25px; padding-left: 2px; flex: none; }
.mic { width: 20px; height: 20px; margin-right: 9px; display: flex; align-items: center; justify-content: center; flex: none; }
.mic.on { border: 1px solid #86bfa0; background: #e9f5ee; }
.mi .tri { margin: 0 9px 0 auto; }
.menu hr { border: 0; border-top: 1px solid #e1e1e1; margin: 0 0 1px 31px; flex: none; }
.mbody { display: flex; padding: 4px 7px 0 2px; flex: 1; }
.tick { margin-top: 21px; margin-right: 8px; }
.mcol { flex: 1; }
.mcol .psearch { height: 24px; margin: 0 -1px 4px 0; padding-bottom: 2px; }
.tree { border: 1px solid #e1e1e1; height: 169px; margin-right: -1px; padding-left: 12px; color: #222; position: relative; font-family: "Noto Sans CJK SC", sans-serif; }
.tree::before { content: ""; position: absolute; left: 12px; top: 8px; height: 48px; border-left: 1px dotted #888; }
.tree label { display: flex; align-items: center; height: 16px; gap: 3px; }
.tree label::before { content: ""; width: 7px; border-top: 1px dotted #888; }
.tree input[type=checkbox] { width: 11px; height: 11px; border-color: #555; }
.tree input[type=checkbox]:checked::after { left: 2px; top: -1px; width: 3px; height: 6px; border-color: #000; }
.tree .mixed::after { content: ""; position: absolute; inset: 2px; background: #000; }
.mbtns { display: flex; justify-content: flex-end; gap: 11px; margin-top: 20px; }
.mbtns button { width: 73px; height: 28px; border: 1px solid #adadad; background: #e1e1e1; color: #000; }
.mbtns .ok { border-color: #0078d7; background: #e5f1fb; }
.grip { border-top: 1px solid #dde6ea; height: 11px; background: linear-gradient(#fff, #eceff1); display: flex; justify-content: flex-end; padding: 3px 2px; flex: none; }

.notes { position: absolute; left: 638px; top: 192px; pointer-events: none; }
.arrows { filter: drop-shadow(2px 3px 2px #0008); }

.status { height: 21px; display: flex; align-items: center; background: #f1f1f1; padding: 0 14px 3px 7px; }
.status > span { width: 42px; }
.views { margin: 0 0 -3px auto; display: flex; align-self: stretch; }
.views button { width: 38px; display: flex; align-items: center; justify-content: center; padding-bottom: 2px; }
.views .cur { background: #cdcdcd; }
.zoom { display: flex; align-items: center; margin-left: 3px; }
.zoom button { width: 10px; font-weight: 700; font-size: 13px; }
.zoom span { font-size: 13px; margin-left: 12px; }
.zoom input { appearance: none; width: 98px; height: 12px; margin: 0 4px; background: linear-gradient(#a8a8a8, #a8a8a8) center / 100% 1px no-repeat; }
.zoom input::-webkit-slider-thumb { appearance: none; width: 4px; height: 12px; background: #666; }

.mark { position: absolute; right: 10px; bottom: 7px; display: flex; gap: 1px; opacity: .85; pointer-events: none; }
.mark b { display: block; font-size: 21px; line-height: 22px; color: #4a8fd0; }
.mark em { display: block; font: 17px/20px "Liberation Sans", sans-serif; color: #62b97a; }
```
